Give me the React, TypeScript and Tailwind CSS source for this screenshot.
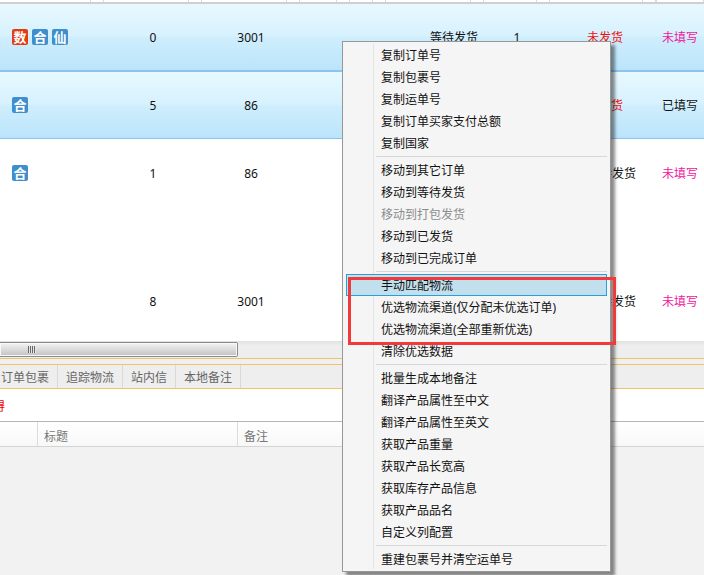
/**
 * Order list with right-click context menu
 */

const COLUMNS = [
  { w: 'w-[104px]', tick: 91 },
  { w: 'w-[98px]', tick: 85 },
  { w: 'w-[98px]', tick: 85 },
  { w: 'w-[50px]', tick: 37 },
  { w: 'w-[36px]', tick: 23 },
  { w: 'w-[98px]', tick: 85 },
  { w: 'w-[66px]', tick: 53 },
  { w: 'w-[106px]', tick: 93 },
  { w: 'w-[48px]', tick: 0 },
]

const MENU_GROUPS = [
  { gap: true, items: ['复制订单号', '复制包裹号', '复制运单号', '复制订单买家支付总额', '复制国家'] },
  { gap: true, items: ['移动到其它订单', '移动到等待发货', '移动到打包发货', '移动到已发货', '移动到已完成订单'] },
  { gap: true, items: ['手动匹配物流', '优选物流渠道(仅分配未优选订单)', '优选物流渠道(全部重新优选)', '清除优选数据'] },
  {
    gap: true,
    items: [
      '批量生成本地备注',
      '翻译产品属性至中文',
      '翻译产品属性至英文',
      '获取产品重量',
      '获取产品长宽高',
      '获取库存产品信息',
      '获取产品品名',
      '自定义列配置',
    ],
  },
  { gap: false, items: ['重建包裹号并清空运单号'] },
]

function Badge({ label, red }: { label: string; red?: boolean }) {
  return (
    <span
      className={`flex h-4 w-4 items-center justify-center rounded-[2px] text-[13px] leading-none font-bold text-white ${
        red ? 'bg-[#e23d12]' : 'bg-[#3f8fce]'
      }`}
    >
      {label}
    </span>
  )
}

function Row({
  className,
  badges,
  num,
  code,
  status,
  count,
  ship,
  shipClass,
  note,
  noteClass,
}: {
  className: string
  badges: React.ReactNode
  num: string
  code: string
  status?: string
  count?: string
  ship: string
  shipClass: string
  note: string
  noteClass: string
}) {
  return (
    <div className={`flex items-center pt-[2px] text-[12px] text-[#111] ${className}`}>
      <div className="-mt-[2px] flex w-[104px] gap-1 pl-3">{badges}</div>
      <div className="w-[98px] text-center">{num}</div>
      <div className="w-[98px] text-center">{code}</div>
      <div className="w-[124px]" />
      <div className="w-[60px] text-center">{status}</div>
      <div className="w-[66px] text-center">{count}</div>
      <div className={`w-[106px] text-center ${shipClass}`}>{ship}</div>
      <div className={`w-[48px] text-center ${noteClass}`}>{note}</div>
    </div>
  )
}

function ContextMenu() {
  return (
    <div className="absolute top-[41px] left-[342px] flex h-[531px] w-[269px] border border-[#979797] bg-[#f5f5f5] pt-[2px] text-[12px] text-[#111] shadow-[4px_4px_3px_rgba(0,0,0,0.45)]">
      <div className="mb-[2px] w-[31px] border-r border-[#e4e4e4]" />
      <div className="flex-1">
        {MENU_GROUPS.map((group) => (
          <div key={group.items[0]}>
            {group.items.map((item) => {
              if (item === '手动匹配物流') {
                return (
                  <div
                    key={item}
                    className="-ml-[28px] mr-[3px] flex h-[22px] items-center border border-[#26a0da] bg-[#c1dfed] pt-[2px] pl-[34px]"
                  >
                    {item}
                  </div>
                )
              }
              return (
                <div
                  key={item}
                  className={`flex h-[22px] items-center pt-[2px] pl-[7px] ${item === '移动到打包发货' ? 'text-[#8c8c8c]' : ''}`}
                >
                  {item}
                </div>
              )
            })}
            {group.gap && (
              <div className="flex h-[5px] items-center pr-[3px] pl-[2px]">
                <div className="h-px w-full bg-[#d7d7d7]" />
              </div>
            )}
          </div>
        ))}
      </div>
    </div>
  )
}

export default function App() {
  const rowBlue =
    'bg-[linear-gradient(#e8f9ff,#d6f1fe_49%,#cfeefd_50%,#bbe4fb)] border-[#8cc4f0]'

  return (
    <div
      className="relative h-[575px] w-[704px] overflow-hidden bg-[#f2f2f2]"
      style={{ fontFamily: '"Noto Sans", "Noto Sans CJK SC", sans-serif' }}
    >
      {/* Orders table */}
      <div className="h-[341px] overflow-hidden bg-white">
        <div className="flex h-[4px] border-b-2 border-[#cfcfcf]">
          {COLUMNS.map((col, i) => (
            <div key={i} className={`flex ${col.w} border-r border-[#d8d8d8]`}>
              <div className="h-full border-r border-[#d8d8d8]" style={{ width: col.tick }} />
            </div>
          ))}
        </div>
        <Row
          className={`h-[68px] border-b-2 ${rowBlue}`}
          badges={
            <>
              <Badge label="数" red />
              <Badge label="合" />
              <Badge label="仙" />
            </>
          }
          num="0"
          code="3001"
          status="等待发货"
          count="1"
          ship="未发货"
          shipClass="pl-[4px] text-[#f01010]"
          note="未填写"
          noteClass="text-[#f0169b]"
        />
        <Row
          className={`h-[67px] border-b ${rowBlue}`}
          badges={<Badge label="合" />}
          num="5"
          code="86"
          ship="未发货"
          shipClass="pl-[4px] text-[#f01010]"
          note="已填写"
          noteClass=""
        />
        <Row
          className="h-[68px]"
          badges={<Badge label="合" />}
          num="1"
          code="86"
          ship="等待发货"
          shipClass="pl-[18px]"
          note="未填写"
          noteClass="text-[#f0169b]"
        />
        <Row
          className="h-[188px]"
          badges={null}
          num="8"
          code="3001"
          ship="等待发货"
          shipClass="pl-[18px]"
          note="未填写"
          noteClass="text-[#f0169b]"
        />
      </div>

      {/* Horizontal scrollbar */}
      <div className="h-[17px] bg-[linear-gradient(#e2e2e2,#eeeeee_30%,#eeeeee)] pt-px">
        <div className="flex h-[15px] w-[238px] items-center rounded-r-[2px] border-y border-r border-[#8a8a8a] bg-[linear-gradient(#f4f4f4,#c2c2c2)] pl-[28px] shadow-[inset_0_0_0_1px_#f8f8f8]">
          <div className="h-[7px] w-[8px] bg-[repeating-linear-gradient(90deg,#666_0,#666_1px,#e8e8e8_1px,#e8e8e8_2px)]" />
        </div>
      </div>

      {/* Detail tabs */}
      <div className="h-[6px] border-t border-[#ecc566] bg-[#f0f0f0]" />
      <div className="flex h-[25px] border-y border-[#ecc566] bg-[#eeeeee] text-[12px] text-[#666]">
        <div className="flex w-[58px] items-center justify-end border-r border-[#d9d9d9] pt-[2px] pr-[8px]">订单包裹</div>
        <div className="flex w-[65px] items-center justify-center border-r border-[#d9d9d9] pt-[2px]">追踪物流</div>
        <div className="flex w-[53px] items-center justify-center border-r border-[#d9d9d9] pt-[2px]">站内信</div>
        <div className="flex w-[65px] items-center justify-center border-r border-[#d9d9d9] pt-[2px]">本地备注</div>
      </div>

      {/* Notice line, its text is cut by the left edge */}
      <div className="flex h-[32px] items-center overflow-hidden bg-white pt-[4px] text-[12px] text-[#f00000]">
        <span className="-ml-[7px]">得</span>
      </div>

      {/* Detail table head */}
      <div className="flex h-[26px] border-y border-t-[#b5b5b5] border-b-[#d4d4d4] bg-[linear-gradient(#ffffff,#f8f8f8)] text-[12px] text-[#777]">
        <div className="w-[38px] border-r border-[#dcdcdc]" />
        <div className="flex w-[200px] items-center border-r border-[#dcdcdc] pt-[5px] pl-[6px]">标题</div>
        <div className="flex items-center pt-[5px] pl-[6px]">备注</div>
      </div>

      <ContextMenu />

      {/* Red annotation box drawn over the screenshot */}
      <div className="absolute top-[277px] left-[348px] h-[68px] w-[268px] border-[3px] border-[#f23a3a]" />
    </div>
  )
}
